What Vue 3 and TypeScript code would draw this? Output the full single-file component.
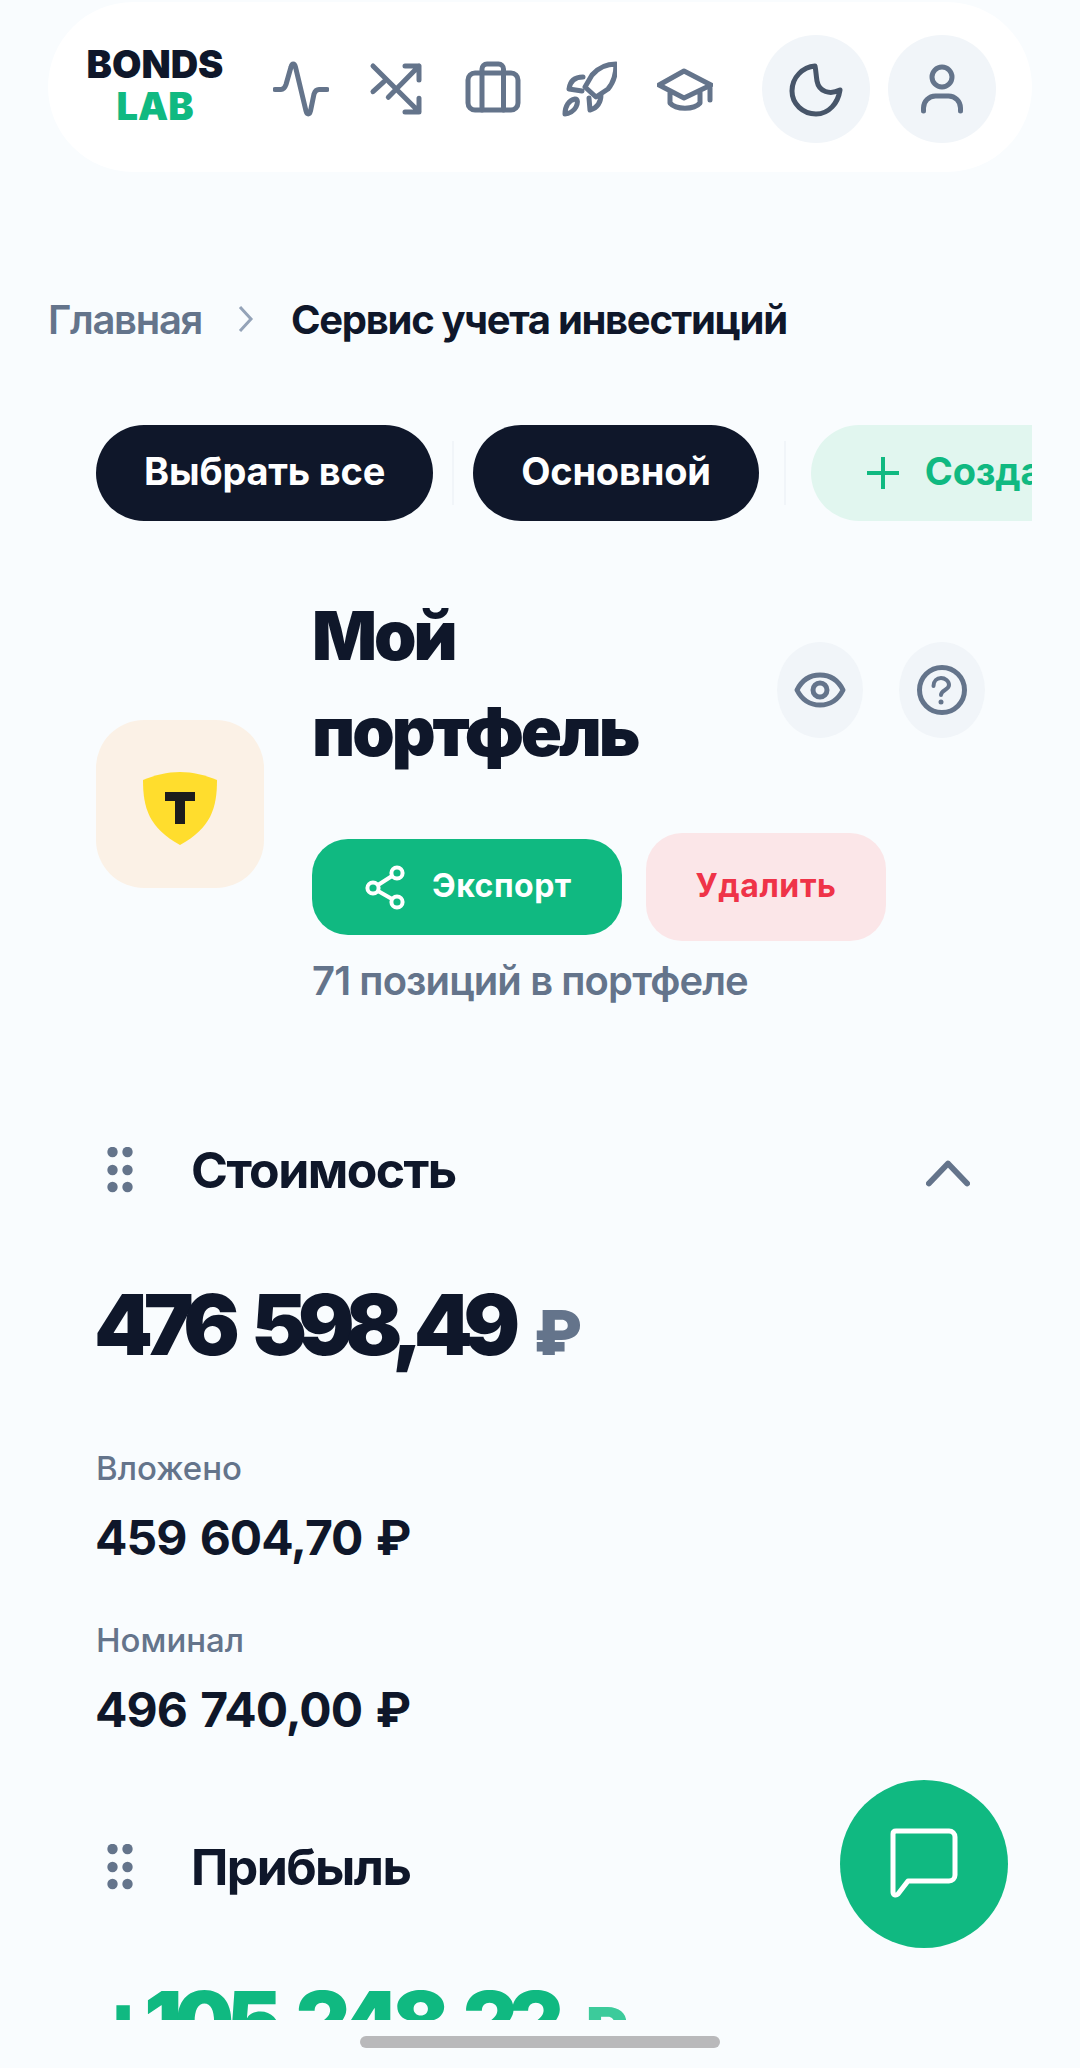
<script setup lang="ts">
const dotRows: number[] = [5, 23, 40]
</script>

<template>
  <div class="screen">
    <main class="scroll">
      <header class="topbar">
        <div class="logo"><span>BONDS</span><span class="lab">LAB</span></div>
        <nav class="nav">
          <svg class="ic" viewBox="0 0 56 56"><path d="M2 28.5H8c3 0 4-2 5-5L18 6c1-4 3.5-4 4.5 0L33 50c1 4 3.5 4 4.5 0L41 33c1-3 2-4.5 5-4.5H54" /></svg>
          <svg class="ic" viewBox="0 0 56 56"><path d="M4 5L50 50.7M50 37.3V51H36M4 30.7L15 20.7M19.3 36.3L50 5M36 5H50V19" /></svg>
          <svg class="ic" viewBox="0 0 56 56"><rect x="3" y="12" width="50" height="37" rx="7" /><path d="M17 12V49M38.500 12V49M17 12V8a5 5 0 0 1 5-5h11.500a5 5 0 0 1 5 5V12" /></svg>
          <svg class="ic" viewBox="0 0 56 56"><path d="M55 3C45 3 37 7 31 14L24 26L35 36L47 28C53 21 55 12 55 3ZM22 16C14 16 9 20 8 28L21 30M40 33C40 42 36 47 29 49L28 37M4 53C4 45 8 39 14 38C17 38 17 42 15 46C13 50 8 53 4 53Z" /></svg>
          <svg class="ic" viewBox="0 0 56 56"><path d="M2 24L27 10L54 24L27 37ZM13 31V42C19 49 37 49 43 42V31M53 24V39" /></svg>
        </nav>
        <div class="round-btn push"><svg class="ic moon" viewBox="0 0 56 56"><path d="M27 5C15 6 4 16 4 30C4 43 15 53 28 53C41 53 50 42 52 29C42 34 31 31 29 20C28 14 28 10 27 5Z" /></svg></div>
        <div class="round-btn"><svg class="ic" viewBox="0 0 56 56"><circle cx="28" cy="16" r="10" /><path d="M9.500 50V47A12 12 0 0 1 21.500 35H34.500A12 12 0 0 1 46.500 47V50" /></svg></div>
      </header>

      <div class="crumbs">
        <span class="crumb-home">Главная</span>
        <svg class="crumb-arrow" viewBox="0 0 16 28"><path d="M2 2L13 14L2 26" /></svg>
        <span class="crumb-current">Сервис учета инвестиций</span>
      </div>

      <div class="chips">
        <button class="chip">Выбрать все</button>
        <i class="sep"></i>
        <button class="chip">Основной</button>
        <i class="sep sep-wide"></i>
        <button class="chip chip-new">
          <svg class="plus" viewBox="0 0 34 34"><path d="M17 1V33M1 17H33" /></svg>
          <span>Создать</span>
        </button>
      </div>

      <section class="portfolio">
        <div class="brand">
          <svg class="shield" viewBox="0 0 74 74">
            <path class="shield-bg" d="M0 8C12 3 24 0 37 0C50 0 62 3 74 8C74 36 68 56 37 73C6 56 0 36 0 8Z" />
            <path class="shield-t" d="M22 20H52V29H42V52H32V29H22Z" />
          </svg>
        </div>
        <div class="info">
          <div class="title-row">
            <h1>Мой портфель</h1>
            <div class="tools">
              <div class="tool"><svg class="ic" viewBox="0 0 56 56"><path d="M5 28C10 18 18 13 28 13C38 13 46 18 51 28C46 38 38 43 28 43C18 43 10 38 5 28Z" /><circle cx="28" cy="28" r="7" /></svg></div>
              <div class="tool"><svg class="ic" viewBox="0 0 56 56"><circle cx="28" cy="28" r="22.500" /><path class="thin" d="M19.500 24C19.500 19 23 16 27 16C31 16 35 19 35 23C35 28 27 28 27 33" /><circle class="fill" cx="27" cy="40" r="2.500" /></svg></div>
            </div>
          </div>
          <div class="actions">
            <button class="btn-export">
              <svg class="share" viewBox="0 0 48 52"><circle cx="37" cy="12" r="5.600" /><circle cx="13" cy="27" r="5.600" /><circle cx="37" cy="41" r="5.600" /><path d="M18 24L32 15M18 30L32 38" /></svg>
              <span>Экспорт</span>
            </button>
            <button class="btn-delete">Удалить</button>
          </div>
          <div class="count">71 позиций в портфеле</div>
        </div>
      </section>

      <section class="block">
        <div class="block-head">
          <svg class="grip" viewBox="0 0 26 46"><g v-for="y in dotRows" :key="y"><circle cx="5.500" :cy="y" r="5.200" /><circle cx="20.500" :cy="y" r="5.200" /></g></svg>
          <h2>Стоимость</h2>
          <svg class="chev" viewBox="0 0 46 28"><path d="M3 25L23 4L43 25" /></svg>
        </div>
        <div class="amount">476 598,49 <span class="cur">₽</span></div>
        <div class="label first">Вложено</div>
        <div class="value">459 604,70 ₽</div>
        <div class="label">Номинал</div>
        <div class="value">496 740,00 ₽</div>
      </section>

      <section class="block profit">
        <div class="block-head">
          <svg class="grip" viewBox="0 0 26 46"><g v-for="y in dotRows" :key="y"><circle cx="5.500" :cy="y" r="5.200" /><circle cx="20.500" :cy="y" r="5.200" /></g></svg>
          <h2>Прибыль</h2>
        </div>
        <div class="amount green">+105 248,22 <span class="cur">₽</span></div>
      </section>
    </main>

    <div class="fab">
      <svg viewBox="0 0 72 72" class="chat"><path d="M8 3H61A6 6 0 0 1 67 9V47A6 6 0 0 1 61 53H20L10 66C8 68 5 67 5 64V6C5 4 6 3 8 3Z" /></svg>
    </div>
    <div class="home-bar"></div>
  </div>
</template>

<style>
html, body { margin: 0; background: #f9fcfe; }
</style>

<style scoped>
.screen {
  position: relative;
  width: 1080px;
  height: 2068px;
  overflow: hidden;
  background: #f9fcfe;
  font-family: Inter, "Noto Sans", sans-serif;
  color: #0f172a;
}
.scroll { height: 2020px; overflow: hidden; }

.topbar {
  display: flex;
  align-items: center;
  height: 170px;
  margin: 2px 48px 0;
  padding: 3px 36px 0 36px;
  box-sizing: border-box;
  border-radius: 85px;
  background: #ffffff;
}
.logo {
  display: flex;
  flex-direction: column;
  align-items: center;
  width: 142px;
  margin-top: -7px;
  font-size: 38px;
  line-height: 42px;
  font-weight: 900;
  letter-spacing: 0;
}
.lab { color: #10b981; }
.nav { display: flex; gap: 40px; margin-left: 47px; }
.ic {
  display: block;
  width: 56px;
  height: 56px;
  flex: none;
  fill: none;
  stroke: #64748b;
  stroke-width: 5;
  stroke-linecap: round;
  stroke-linejoin: round;
}
.ic .fill { fill: #64748b; stroke: none; }
.ic .thin { stroke-width: 4; }
.moon { stroke: #475569; }
.round-btn {
  display: flex;
  align-items: center;
  justify-content: center;
  flex: none;
  width: 108px;
  height: 108px;
  border-radius: 50%;
  background: #f1f5f9;
}
.round-btn.push { margin-left: auto; margin-right: 18px; }

.crumbs {
  display: flex;
  align-items: center;
  margin: 125px 0 0 48px;
  height: 44px;
  font-size: 40px;
  font-weight: 600;
  letter-spacing: -1.3px;
}
.crumb-home { color: #64748b; }
.crumb-arrow { width: 16px; height: 28px; margin: 0 37px 0 36px; fill: none; stroke: #94a3b8; stroke-width: 3; }
.crumb-current { font-weight: 700; }

.chips {
  display: flex;
  align-items: center;
  margin: 84px 48px 0 96px;
  overflow: hidden;
}
.chip {
  flex: none;
  height: 96px;
  padding: 0 48px 4px;
  border: 0;
  border-radius: 48px;
  background: #0f172a;
  color: #fff;
  font: 700 38px Inter, sans-serif;
  letter-spacing: -0.2px;
}
.sep { flex: none; width: 2px; height: 64px; margin: 0 19px; background: #f1f5f9; }
.sep-wide { margin: 0 25px; }
.chip-new {
  display: flex;
  align-items: center;
  gap: 25px;
  background: #e1f6ef;
  color: #10b981;
  padding-left: 55px;
}
.plus { width: 34px; height: 34px; margin-top: 4px; fill: none; stroke: #10b981; stroke-width: 4; }

.portfolio {
  display: flex;
  align-items: center;
  gap: 48px;
  margin: 66px 48px 0 96px;
}
.brand {
  display: flex;
  align-items: center;
  justify-content: center;
  flex: none;
  width: 168px;
  height: 168px;
  margin-top: 17px;
  border-radius: 48px;
  background: #fbf1e6;
}
.shield { width: 74px; height: 74px; margin-top: 10px; }
.shield-bg { fill: #ffdd2d; }
.shield-t { fill: #1c1c1c; }
.info { flex: 1; min-width: 0; }
.title-row { display: flex; align-items: center; justify-content: space-between; padding-right: 47px; }
h1 {
  width: 400px;
  margin: 0;
  font-size: 68px;
  line-height: 96px;
  font-weight: 900;
  letter-spacing: -3px;
}
.tools { display: flex; gap: 36px; margin-top: 14px; }
.tool {
  display: flex;
  align-items: center;
  justify-content: center;
  width: 86px;
  height: 96px;
  border-radius: 50%;
  background: #f1f5f9;
}
.actions { display: flex; align-items: center; gap: 24px; margin-top: 54px; }
.btn-export {
  display: flex;
  align-items: center;
  gap: 24px;
  width: 310px;
  height: 96px;
  padding: 0 0 4px 48px;
  border: 0;
  border-radius: 36px;
  background: #10b981;
  color: #fff;
  font: 700 32px Inter, sans-serif;
  letter-spacing: 0.5px;
}
.share { width: 48px; height: 52px; margin-top: 4px; fill: none; stroke: #fff; stroke-width: 4; }
.btn-delete {
  width: 240px;
  height: 108px;
  padding: 0 0 4px;
  border: 0;
  border-radius: 36px;
  background: #fbe6e8;
  color: #ef3348;
  font: 700 32px Inter, sans-serif;
  letter-spacing: 0.6px;
}
.count { margin-top: 18px; font-size: 40px; line-height: 44px; font-weight: 600; color: #64748b; letter-spacing: -0.9px; }

.block { margin: 0 48px 0 96px; }
.block-head { display: flex; align-items: center; height: 60px; margin-top: 137px; }
.grip { width: 26px; height: 46px; margin-left: 11px; fill: #64748b; flex: none; }
h2 { margin: 0 0 0 58px; font-size: 50px; line-height: 60px; font-weight: 700; letter-spacing: -1.6px; }
.chev { width: 44px; height: 28px; margin: 6px 62px 0 auto; fill: none; stroke: #64748b; stroke-width: 6; stroke-linecap: round; stroke-linejoin: round; }
.amount { margin: 73px 0 0 -2px; font-size: 84px; line-height: 104px; font-weight: 900; letter-spacing: -9.200px; word-spacing: 13px; white-space: nowrap; }
.cur { color: #64748b; font-size: 62px; letter-spacing: 0; margin-left: 2px; }
.label { margin-top: 52px; font-size: 33px; line-height: 40px; font-weight: 500; color: #64748b; }
.label.first { margin-top: 63px; }
.value { margin: 20px 0 0 -1px; font-size: 48px; line-height: 60px; font-weight: 700; letter-spacing: -1px; word-spacing: 3px; }
.profit .block-head { margin-top: 97px; }
.green { color: #10b981; letter-spacing: -7.900px; }
.green .cur { color: #3ccb9b; }

.fab {
  position: absolute;
  left: 840px;
  top: 1780px;
  display: flex;
  align-items: center;
  justify-content: center;
  width: 168px;
  height: 168px;
  border-radius: 50%;
  background: #10b981;
}
.chat { width: 72px; height: 72px; fill: none; stroke: #fff; stroke-width: 5; stroke-linejoin: round; }
.home-bar {
  position: absolute;
  left: 360px;
  top: 2036px;
  width: 360px;
  height: 12px;
  border-radius: 6px;
  background: #b9b9bb;
}
</style>
